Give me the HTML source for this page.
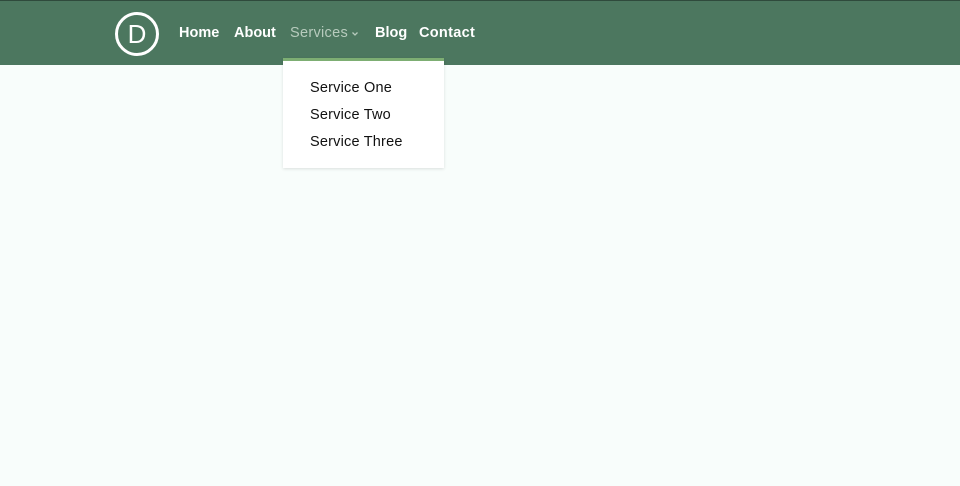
<!DOCTYPE html>
<html><head><style>
body{margin:0;width:960px;height:486px;background:#f8fdfb;font-family:"Liberation Sans",sans-serif;position:relative;overflow:hidden}
.hdr{position:absolute;left:0;top:0;width:960px;height:65px;background:#4c775f;border-top:1px solid #2f4a3c;box-sizing:border-box}
.logo{position:absolute;left:115px;top:11px;width:38px;height:38px;border:3px solid #fff;border-radius:50%;color:#fff;font-size:26px;line-height:38px;text-align:center}
.nav{position:absolute;top:24px;color:#fff;font-size:14.5px;font-weight:bold;letter-spacing:0}
.dd{position:absolute;left:283px;top:58px;width:161px;height:110px;background:#fff;border-top:3px solid #7dae73;box-sizing:border-box;box-shadow:0 1px 3px rgba(0,0,0,0.12)}
.dd div{position:absolute;left:27px;font-size:14.5px;color:#111;letter-spacing:0.2px}
</style></head><body>
<div class="hdr">
<div class="logo">D</div>
<div class="nav" style="left:179px">Home</div>
<div class="nav" style="left:234px">About</div>
<div class="nav" style="left:290px;color:#b7cbbd;font-weight:normal;letter-spacing:0.3px">Services</div>
<svg style="position:absolute;left:351px;top:30px" width="8" height="6" viewBox="0 0 8 6"><path d="M1.5 1.5L4 4L6.5 1.5" stroke="#b7cbbd" stroke-width="1.3" fill="none"/></svg>
<div class="nav" style="left:375px">Blog</div>
<div class="nav" style="left:419px;letter-spacing:0.3px">Contact</div>
</div>
<div class="dd">
<div style="top:19px">Service One</div>
<div style="top:46px">Service Two</div>
<div style="top:73px">Service Three</div>
</div>
</body></html>
